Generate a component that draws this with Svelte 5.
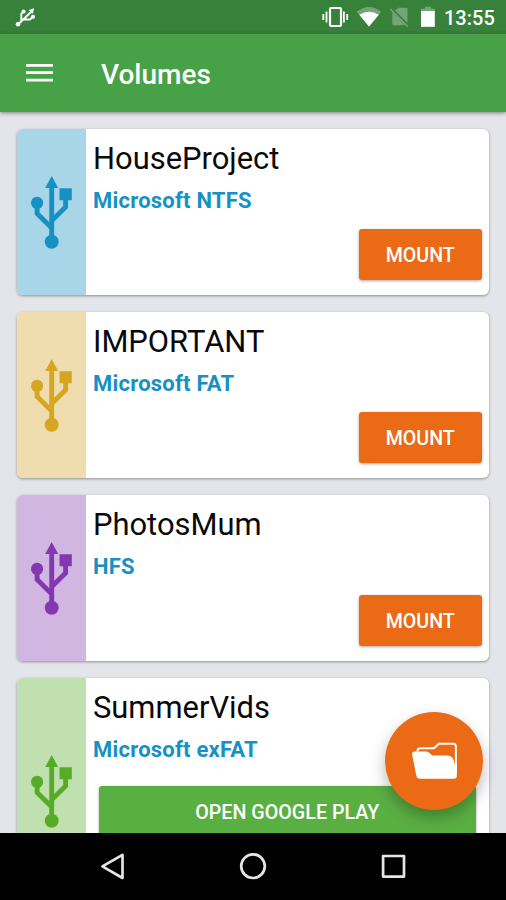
<script>
  const volumes = [
    { name: 'HouseProject', format: 'Microsoft NTFS', color: '#1791c4', tint: '#a9d5e8' },
    { name: 'IMPORTANT', format: 'Microsoft FAT', color: '#d6a621', tint: '#f0ddaf' },
    { name: 'PhotosMum', format: 'HFS', color: '#8338b2', tint: '#d1b6e1' },
    { name: 'SummerVids', format: 'Microsoft exFAT', color: '#57ac27', tint: '#c1e0af', store: true },
  ];
</script>

<div class="screen">
  <header>
    <div class="status">
      <svg class="usb-small" width="22" height="22" viewBox="0 0 22 22">
        <g fill="none" stroke="#fff" stroke-width="1.9">
          <path d="M3 18.5 17.5 4.5M6.3 15.3 V7.8 L9 5M8.2 13.5H15L18 10.5" />
        </g>
        <g fill="#fff"><circle cx="3" cy="18.3" r="2.3" /><circle cx="8.6" cy="5.4" r="2" /><path d="M13.6 4 19.2 2.2 17.8 7.8Z" /><circle cx="18" cy="10.8" r="2.1" /></g>
      </svg>
      <svg class="indicators" width="116" height="34" viewBox="320 0 116 34">
        <path d="M323.3 14v6M326.5 11.5v11M343.9 11.5v11M347.2 14v6" stroke="#fff" stroke-width="1.8" />
        <rect x="330" y="8" width="11" height="18" rx="1" fill="none" stroke="#fff" stroke-width="2.2" />
        <path d="M356.7 11.8Q369 2 381.2 11.8L369 26.5Z" fill="#73a577" />
        <path d="M359.3 14.8Q369 8.5 378.8 14.8L369 26.5Z" fill="#fff" />
        <path d="M398.5 7.7h7.7q1.3 0 1.3 1.3v14L395 10.6ZM392.3 12.1 405.5 25.3H393.8q-1.5 0-1.5-1.5Z" fill="#73a577" />
        <path d="M390.3 9 407.8 26.5" stroke="#73a577" stroke-width="1.5" />
        <path d="M425 6.8h6v2h3.8v3H421v-3h4Z" fill="#73a577" />
        <path d="M421 11h13.8v15.8H421Z" fill="#fff" />
      </svg>
      <span class="clock">13:55</span>
    </div>
    <div class="bar">
      <svg width="27" height="20" viewBox="0 0 27 20"><path d="M0 2.3H27M0 9.7H27M0 17.2H27" stroke="#fff" stroke-width="2.8" /></svg>
      <h1>Volumes</h1>
    </div>
  </header>

  <main>
    {#each volumes as v}
      <article class:tall={v.store}>
        <div class="stripe" style="background:{v.tint};color:{v.color}">
          <svg width="42" height="74" viewBox="0 0 42 74">
            <path d="M20.7 0 27.2 12H14.2ZM28.5 12.2H40.8V24.3H28.5Z" fill="currentColor" />
            <path d="M20.7 10V62M6.1 30V37.5L20.7 52M34.6 22V31L20.7 44.7" fill="none" stroke="currentColor" stroke-width="4.9" />
            <circle cx="6.1" cy="26.9" r="6.1" fill="currentColor" />
            <circle cx="20.7" cy="65.8" r="7" fill="currentColor" />
          </svg>
        </div>
        <div class="body">
          <h2>{v.name}</h2>
          <p>{v.format}</p>
          <button class:store={v.store}>{v.store ? 'OPEN GOOGLE PLAY' : 'MOUNT'}</button>
        </div>
      </article>
    {/each}
  </main>

  <button class="fab" aria-label="Open folder">
    <svg width="46" height="38" viewBox="0 0 46 38">
      <path d="M5.5 9.5V8.5Q6 6.3 8.3 6.3H22L27 1.7H41Q43.9 1.7 43.9 4.5V32" fill="none" stroke="#fff" stroke-width="2" />
      <path d="M2.6 9.5H14.6Q16.5 9.5 17.5 11L20.2 13.6H35.5Q42 13.6 42.9 24L43.2 21H44.9V33.5Q44.9 36.8 41.5 36.8H8Q4.9 36.8 4.3 33.5L.1 12.5Q-.2 9.5 2.6 9.5Z" fill="#fff" />
    </svg>
  </button>

  <nav>
    <svg width="506" height="67" viewBox="0 0 506 67" fill="none" stroke="#e5e5e5" stroke-width="2.7" stroke-linejoin="round">
      <path d="M122.5 21.8V45L102.4 33.4Z" />
      <circle cx="253" cy="33.2" r="11.8" />
      <rect x="383.1" y="23" width="20.9" height="20.6" />
    </svg>
  </nav>
</div>

<style>
  :global(body) { margin: 0; }
  .screen {
    position: relative;
    display: flex;
    flex-direction: column;
    width: 506px;
    height: 900px;
    overflow: hidden;
    background: #e4e5ea;
    font-family: Roboto, sans-serif;
  }
  header { flex: none; background: #46a147; box-shadow: 0 1px 4px rgba(0, 0, 0, .45); z-index: 1; }
  .status {
    box-sizing: border-box;
    height: 34px;
    display: flex;
    align-items: center;
    padding: 0 11px 0 15px;
    background: linear-gradient(#38813b 30px, #327435);
    color: #fff;
  }
  .usb-small { margin-top: -1px; }
  .indicators { margin-left: auto; }
  .clock { width: 51px; margin-left: 8px; padding-top: 1px; font-size: 20px; font-weight: 500; line-height: 34px; white-space: nowrap; }
  .bar { height: 78px; display: flex; align-items: center; padding-left: 26px; }
  h1 { margin: 3px 0 0 48px; color: #fff; font-size: 28px; font-weight: 500; line-height: 36px; }
  main { flex: 1; min-height: 0; overflow: hidden; display: flex; flex-direction: column; gap: 17px; padding: 17px 17px 0; }
  article {
    flex: none;
    display: flex;
    height: 166px;
    border-radius: 6px;
    background: #fff;
    box-shadow: 0 1px 3px rgba(0, 0, 0, .38);
  }
  article.tall { height: 227px; }
  .stripe { box-sizing: border-box; width: 69px; padding-top: 1px; flex: none; display: flex; align-items: center; justify-content: center; border-radius: 6px 0 0 6px; }
  .body { flex: 1; display: flex; flex-direction: column; padding: 11px 7px 0; }
  h2 { margin: 0; color: #090909; font-size: 30.9px; font-weight: 400; line-height: 38px; }
  p { margin: 10px 0 0; color: #1791c4; font-size: 22px; font-weight: 700; line-height: 26px; letter-spacing: .22px; }
  button { border: 0; font-family: inherit; color: #fff; }
  .body button {
    align-self: flex-end;
    width: 123.5px;
    height: 50.5px;
    margin-top: 15.3px;
    padding: 2px 0 0;
    border-radius: 3px;
    background: #ea6a15;
    box-shadow: 0 1px 3px rgba(0, 0, 0, .35);
    font-size: 19.6px;
    font-weight: 500;
  }
  .body button.store { align-self: stretch; width: auto; margin: 23px 6px 0 5.5px; background: #5aaf43; font-size: 19.7px; }
  .fab {
    position: absolute;
    left: 385.3px;
    top: 711.6px;
    width: 98px;
    height: 98px;
    padding: 0 0 0 2px;
    border-radius: 50%;
    display: flex;
    align-items: center;
    justify-content: center;
    background: #ea6a15;
    box-shadow: 0 7px 15px rgba(0, 0, 0, .28);
  }
  nav { position: relative; flex: none; height: 67px; background: #000; }
  nav svg { display: block; }
</style>
